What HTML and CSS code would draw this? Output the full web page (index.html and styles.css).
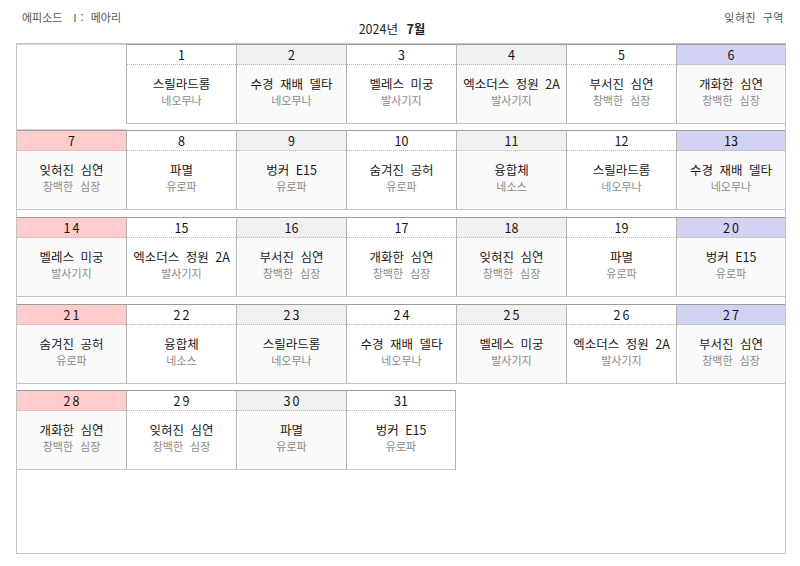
FILE: index.html
```html
<!DOCTYPE html>
<html lang="ko">
<head>
<meta charset="utf-8">
<title>2024년 7월</title>
<link rel="stylesheet" href="styles.css">
</head>
<body>
<div class="top">
  <div class="top-left">에피소드 Ⅰ: 메아리</div>
  <div class="top-center">2024년 <b>7월</b></div>
  <div class="top-right">잊혀진 구역</div>
</div>
<div class="cal">
  <div class="week">
    <div class="blank"></div>
    <div class="day c1"><div class="num">1</div><div class="body"><div class="t">스릴라드롬</div><div class="s">네오무나</div></div></div>
    <div class="day c2"><div class="num">2</div><div class="body"><div class="t">수경 재배 델타</div><div class="s">네오무나</div></div></div>
    <div class="day c3"><div class="num">3</div><div class="body"><div class="t">벨레스 미궁</div><div class="s">발사기지</div></div></div>
    <div class="day c4"><div class="num">4</div><div class="body"><div class="t">엑소더스 정원 2A</div><div class="s">발사기지</div></div></div>
    <div class="day c5"><div class="num">5</div><div class="body"><div class="t">부서진 심연</div><div class="s">창백한 심장</div></div></div>
    <div class="day c6"><div class="num">6</div><div class="body"><div class="t">개화한 심연</div><div class="s">창백한 심장</div></div></div>
  </div>
  <div class="week">
    <div class="day c0"><div class="num">7</div><div class="body"><div class="t">잊혀진 심연</div><div class="s">창백한 심장</div></div></div>
    <div class="day c1"><div class="num">8</div><div class="body"><div class="t">파멸</div><div class="s">유로파</div></div></div>
    <div class="day c2"><div class="num">9</div><div class="body"><div class="t">벙커 E15</div><div class="s">유로파</div></div></div>
    <div class="day c3"><div class="num">10</div><div class="body"><div class="t">숨겨진 공허</div><div class="s">유로파</div></div></div>
    <div class="day c4"><div class="num">11</div><div class="body"><div class="t">융합체</div><div class="s">네소스</div></div></div>
    <div class="day c5"><div class="num">12</div><div class="body"><div class="t">스릴라드롬</div><div class="s">네오무나</div></div></div>
    <div class="day c6"><div class="num">13</div><div class="body"><div class="t">수경 재배 델타</div><div class="s">네오무나</div></div></div>
  </div>
  <div class="week">
    <div class="day c0"><div class="num sp">14</div><div class="body"><div class="t">벨레스 미궁</div><div class="s">발사기지</div></div></div>
    <div class="day c1"><div class="num">15</div><div class="body"><div class="t">엑소더스 정원 2A</div><div class="s">발사기지</div></div></div>
    <div class="day c2"><div class="num">16</div><div class="body"><div class="t">부서진 심연</div><div class="s">창백한 심장</div></div></div>
    <div class="day c3"><div class="num">17</div><div class="body"><div class="t">개화한 심연</div><div class="s">창백한 심장</div></div></div>
    <div class="day c4"><div class="num">18</div><div class="body"><div class="t">잊혀진 심연</div><div class="s">창백한 심장</div></div></div>
    <div class="day c5"><div class="num">19</div><div class="body"><div class="t">파멸</div><div class="s">유로파</div></div></div>
    <div class="day c6"><div class="num sp">20</div><div class="body"><div class="t">벙커 E15</div><div class="s">유로파</div></div></div>
  </div>
  <div class="week">
    <div class="day c0"><div class="num sp">21</div><div class="body"><div class="t">숨겨진 공허</div><div class="s">유로파</div></div></div>
    <div class="day c1"><div class="num sp">22</div><div class="body"><div class="t">융합체</div><div class="s">네소스</div></div></div>
    <div class="day c2"><div class="num sp">23</div><div class="body"><div class="t">스릴라드롬</div><div class="s">네오무나</div></div></div>
    <div class="day c3"><div class="num sp">24</div><div class="body"><div class="t">수경 재배 델타</div><div class="s">네오무나</div></div></div>
    <div class="day c4"><div class="num sp">25</div><div class="body"><div class="t">벨레스 미궁</div><div class="s">발사기지</div></div></div>
    <div class="day c5"><div class="num sp">26</div><div class="body"><div class="t">엑소더스 정원 2A</div><div class="s">발사기지</div></div></div>
    <div class="day c6"><div class="num sp">27</div><div class="body"><div class="t">부서진 심연</div><div class="s">창백한 심장</div></div></div>
  </div>
  <div class="week">
    <div class="day c0"><div class="num sp">28</div><div class="body"><div class="t">개화한 심연</div><div class="s">창백한 심장</div></div></div>
    <div class="day c1"><div class="num sp">29</div><div class="body"><div class="t">잊혀진 심연</div><div class="s">창백한 심장</div></div></div>
    <div class="day c2"><div class="num sp">30</div><div class="body"><div class="t">파멸</div><div class="s">유로파</div></div></div>
    <div class="day c3 last"><div class="num">31</div><div class="body"><div class="t">벙커 E15</div><div class="s">유로파</div></div></div>
  </div>
</div>
</body>
</html>
```
FILE: styles.css
```css
html, body {
  margin: 0;
  padding: 0;
  background: #fff;
}
body {
  font-family: "Noto Sans CJK KR", "Noto Sans", sans-serif;
  color: #222;
  width: 800px;
  height: 566px;
  overflow: hidden;
}
.top {
  display: grid;
  grid-template-columns: 1fr auto 1fr;
  height: 43px;
  padding: 0 16px 0 22px;
  box-sizing: border-box;
}
.top-left {
  font-size: 11px;
  color: #555;
  line-height: 14px;
  padding-top: 10px;
  word-spacing: 4px;
}
.top-center {
  font-size: 12.5px;
  color: #222;
  line-height: 16px;
  padding-top: 21px;
  padding-right: 22px;
}
.top-center b {
  font-weight: 700;
  margin-left: 5px;
}
.top-right {
  font-size: 11px;
  color: #555;
  line-height: 14px;
  padding-top: 10px;
  text-align: right;
  letter-spacing: 0.5px;
  word-spacing: 3px;
}
.cal {
  margin-left: 16px;
  width: 770px;
  height: 511px;
  box-sizing: border-box;
  border: 1px solid #c4c4c4;
}
.week {
  display: grid;
  grid-template-columns: 109px repeat(5, 110px) 109px;
  margin-bottom: 6px;
}
.week:nth-child(2),
.week:nth-child(3) {
  margin-bottom: 7px;
}
.blank {
  height: 86px;
  margin-bottom: -6px;
  box-sizing: border-box;
  border-top: 1px solid #d4d4d4;
  border-bottom: 1px solid #d4d4d4;
}
.day {
  border-top: 1px solid #9c9c9c;
  border-bottom: 1px solid #c4c4c4;
  border-left: 1px solid #b4b4b4;
  display: flex;
  flex-direction: column;
  text-align: center;
}
.day.c0 {
  border-left: none;
}
.day.last {
  border-right: 1px solid #b4b4b4;
}
.num {
  height: 19px;
  line-height: 19px;
  font-size: 12.5px;
  color: #111;
  border-bottom: 1px dotted #b8b8b8;
}
.num.sp {
  letter-spacing: 2px;
  text-indent: 2px;
}
.body {
  height: 58px;
  box-sizing: border-box;
  padding-top: 10px;
}
.t {
  font-size: 12.5px;
  line-height: 17px;
  color: #1a1a1a;
  white-space: nowrap;
  word-spacing: 3px;
}
.s {
  font-size: 11px;
  line-height: 16px;
  color: #8a8a8a;
  white-space: nowrap;
  word-spacing: 4px;
}
.c0 .num { background: #ffcccc; }
.c2 .num, .c4 .num { background: #f0f0f0; }
.c6 .num { background: #d2d2f2; }
.c0 .body, .c2 .body, .c4 .body, .c6 .body { background: #fafafa; }
```
